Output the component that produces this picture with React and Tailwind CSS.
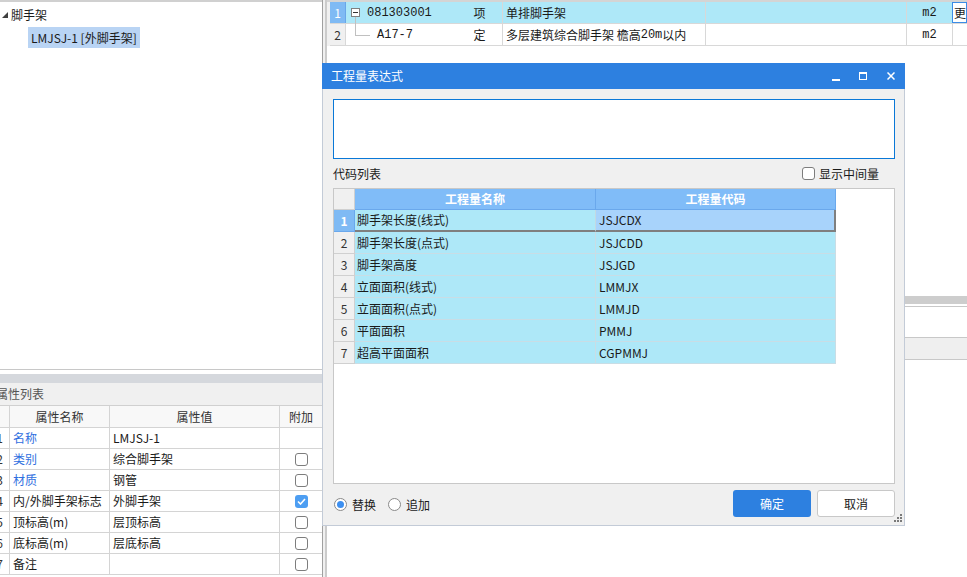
import React from 'react';

const cjk = "font-['Noto_Sans_CJK_SC','Noto_Sans',sans-serif]";
const mono = "font-['Liberation_Mono',monospace]";

const props = [
  { n: 1, name: '名称', blue: true, val: 'LMJSJ-1', cb: null },
  { n: 2, name: '类别', blue: true, val: '综合脚手架', cb: false },
  { n: 3, name: '材质', blue: true, val: '钢管', cb: false },
  { n: 4, name: '内/外脚手架标志', val: '外脚手架', cb: true },
  { n: 5, name: '顶标高(m)', val: '层顶标高', cb: false },
  { n: 6, name: '底标高(m)', val: '层底标高', cb: false },
  { n: 7, name: '备注', val: '', cb: false },
];

const codes = [
  ['脚手架长度(线式)', 'JSJCDX'],
  ['脚手架长度(点式)', 'JSJCDD'],
  ['脚手架高度', 'JSJGD'],
  ['立面面积(线式)', 'LMMJX'],
  ['立面面积(点式)', 'LMMJD'],
  ['平面面积', 'PMMJ'],
  ['超高平面面积', 'CGPMMJ'],
];

const Checkbox = ({ checked }) =>
  checked ? (
    <div className="w-[13px] h-[13px] rounded-[3px] bg-[#4d9ef2] flex items-center justify-center">
      <svg width="9" height="7" viewBox="0 0 9 7">
        <path d="M1 3.5 L3.5 6 L8 1" stroke="white" strokeWidth="1.6" fill="none" />
      </svg>
    </div>
  ) : (
    <div className="w-[13px] h-[13px] rounded-[3px] border border-[#7d7d7d] bg-white" />
  );

const Radio = ({ checked }) => (
  <div className="w-[13px] h-[13px] rounded-full border border-[#8a8a8a] bg-white flex items-center justify-center">
    {checked && <div className="w-[7px] h-[7px] rounded-full bg-[#3d8ff0]" />}
  </div>
);

const LeftPane = () => (
  <div className="w-[323px] h-full flex flex-col border-r border-[#a0a0a0] bg-white">
    {/* tree */}
    <div className="h-[370px] border-t-2 border-[#d0d0d0] border-b border-b-[#c8c8c8] flex flex-col">
      <div className="h-[22px] mt-[2px] flex items-center">
        <svg width="6" height="6" viewBox="0 0 6 6" className="ml-[2px] mr-[3px]">
          <polygon points="6,0 6,6 0,6" fill="#404040" />
        </svg>
        <span className="leading-[22px]">脚手架</span>
      </div>
      <div className="h-[22px] flex items-center ml-[28px]">
        <span className="bg-[#b9d4f4] px-[3px] leading-[21px]">LMJSJ-1 [外脚手架]</span>
      </div>
    </div>
    <div className="h-[4px]" />
    <div className="h-[9px] bg-[#d5d8dd]" />
    <div className="h-[23px] bg-[#f0f0f0] flex items-center text-[#555] -ml-[4px] pl-0 border-b border-[#d0d0d0]">
      属性列表
    </div>
    {/* property table */}
    <div className="flex h-[22px] bg-[#f8f8f8] border-b border-[#d4d4d4] text-[#333]">
      <div className="w-[10px] border-r border-[#d4d4d4]" />
      <div className="w-[100px] border-r border-[#d4d4d4] flex items-center justify-center">属性名称</div>
      <div className="w-[170px] border-r border-[#d4d4d4] flex items-center justify-center">属性值</div>
      <div className="w-[42px] flex items-center justify-center">附加</div>
    </div>
    {props.map((p) => (
      <div key={p.n} className="flex h-[21px] border-b border-[#d4d4d4] shrink-0">
        <div className="w-[10px] overflow-hidden border-r border-[#d4d4d4] flex items-center">
          <div className="w-[20px] -ml-[10px] text-center text-[#333]">{p.n}</div>
        </div>
        <div className={`w-[100px] border-r border-[#d4d4d4] flex items-center pl-[3px] whitespace-nowrap ${p.blue ? 'text-[#2f6fe0]' : ''}`}>
          {p.name}
        </div>
        <div className="w-[170px] border-r border-[#d4d4d4] flex items-center pl-[3px]">{p.val}</div>
        <div className="w-[42px] flex items-center justify-center">
          {p.cb !== null && <Checkbox checked={p.cb} />}
        </div>
      </div>
    ))}
  </div>
);

const TopRow = ({ active, num, children }) => (
  <div className={`flex h-[22px] border-b border-[#d8d8d8] ${active ? 'bg-[#aee8f8]' : 'bg-white'}`}>
    <div
      className={`w-[16px] flex items-center justify-center border-r ${
        active ? 'bg-[#7fbaf4] text-white border-[#6aa6e8]' : 'bg-[#f0f0f0] text-[#333] border-[#d8d8d8]'
      }`}
    >
      {num}
    </div>
    {children}
  </div>
);

const RightPane = () => (
  <div className="flex-1 h-full flex flex-col border-l-2 border-[#cbcbcb] bg-white">
    <div className="pl-[3px] bg-[#f0f0f0] border-t-2 border-[#d4d4d4]">
      <TopRow active num="1">
        <div className="w-[111px] flex items-center pl-[5px]">
          <div className="w-[9px] h-[9px] border border-[#808080] bg-white flex items-center justify-center mr-[7px]">
            <div className="w-[5px] h-px bg-[#333]" />
          </div>
          <span className={mono}>081303001</span>
        </div>
        <div className="w-[45px] flex items-center justify-center">项</div>
        <div className="w-[203px] border-l border-[#d8d8d8] flex items-center pl-[3px]">单排脚手架</div>
        <div className="w-[201px] border-l border-[#d8d8d8]" />
        <div className={`w-[46px] border-l border-[#d8d8d8] flex items-center justify-center ${mono}`}>m2</div>
        <div className="flex-1 bg-white border border-[#3c8ce6] flex items-center pl-[1px] overflow-hidden whitespace-nowrap">更</div>
      </TopRow>
      <TopRow num="2">
        <div className="w-[111px] relative flex items-center">
          <div className="absolute left-[9px] top-[-7px] w-px h-[18px] bg-[#c0c0c0]" />
          <div className="absolute left-[9px] top-[11px] w-[15px] h-px bg-[#c0c0c0]" />
          <span className={`${mono} ml-[31px]`}>A17-7</span>
        </div>
        <div className="w-[45px] flex items-center justify-center">定</div>
        <div className="w-[203px] border-l border-[#d8d8d8] flex items-center pl-[3px] whitespace-nowrap">
          多层建筑综合脚手架&nbsp;檐高<span className={mono}>20m</span>以内
        </div>
        <div className="w-[201px] border-l border-[#d8d8d8]" />
        <div className={`w-[46px] border-l border-[#d8d8d8] flex items-center justify-center ${mono}`}>m2</div>
        <div className="flex-1 border-l border-[#d8d8d8]" />
      </TopRow>
    </div>
    <div className="mt-[250px] h-[8px] bg-[#cdcdcd]" />
    <div className="mt-[2px] h-px bg-[#c8c8c8]" />
    <div className="mt-[30px] h-[23px] bg-[#efefef] border-y border-[#c8c8c8]" />
  </div>
);

const Dialog = () => (
  <div className="absolute left-[322px] top-[63px] w-[583px] h-[463px] flex flex-col">
    <div className="h-[26px] bg-[#2d80e0] flex items-center text-white pl-[9px] shrink-0">
      <span className="flex-1">工程量表达式</span>
      <svg width="8" height="8" viewBox="0 0 8 8" className="mr-[19px] mt-[4px]">
        <rect x="0" y="5" width="8" height="2" fill="white" />
      </svg>
      <svg width="8" height="8" viewBox="0 0 8 8" className="mr-[20px]">
        <rect x="0.5" y="0.5" width="7" height="7" fill="none" stroke="white" strokeWidth="1" />
        <rect x="0" y="0" width="8" height="2" fill="white" />
      </svg>
      <svg width="8" height="8" viewBox="0 0 8 8" className="mr-[10px]">
        <path d="M0.5 0.5 L7.5 7.5 M7.5 0.5 L0.5 7.5" stroke="white" strokeWidth="1.5" />
      </svg>
    </div>
    <div className="flex-1 relative flex flex-col bg-[#f0f0f0] border border-t-0 border-[#c3cbd7] pl-[10px] pr-[9px] pt-[10px]">
      <div className="h-[60px] bg-white border border-[#0a78d7] shrink-0" />
      <div className="h-[29px] flex items-center justify-between shrink-0">
        <span>代码列表</span>
        <div className="flex items-center gap-[4px] mr-[16px]">
          <Checkbox checked={false} />
          <span>显示中间量</span>
        </div>
      </div>
      <div className="h-[296px] bg-white border border-[#c8c8c8] shrink-0 flex flex-col">
        <div className="flex h-[21px] shrink-0">
          <div className="w-[21px] bg-[#f0f0f0] border-r border-b border-[#d0d0d0]" />
          <div className="w-[241px] bg-[#80bcf8] border-r border-b border-[#6aa8ec] flex items-center justify-center text-white font-bold">
            工程量名称
          </div>
          <div className="w-[240px] bg-[#80bcf8] border-b border-r border-[#6aa8ec] flex items-center justify-center text-white font-bold">
            工程量代码
          </div>
        </div>
        {codes.map(([name, code], i) => {
          const active = i === 0;
          return (
            <div key={code} className="flex h-[22px] shrink-0">
              <div
                className={`w-[21px] flex items-center justify-center border-r border-b ${
                  active ? 'bg-[#7fbaf4] text-white font-bold border-[#6aa8ec]' : 'bg-[#f0f0f0] text-[#333] border-[#d0d0d0]'
                }`}
              >
                {i + 1}
              </div>
              <div
                className={`w-[241px] bg-[#aee8f8] flex items-center pl-[2px] border-r ${
                  active ? 'border-b-2 border-b-[#7f7f7f] border-r-[#c3d9e2]' : 'border-b border-[#c9dde5]'
                }`}
              >
                {name}
              </div>
              <div
                className={`w-[240px] flex items-center pl-[3px] ${
                  active ? 'bg-[#a8d3fb] border-b-2 border-r-2 border-[#7f7f7f]' : 'bg-[#aee8f8] border-b border-r border-[#c9dde5]'
                }`}
              >
                {code}
              </div>
            </div>
          );
        })}
      </div>
      <div className="flex-1 flex items-center justify-between">
        <div className="flex items-center ml-[1px]">
          <Radio checked />
          <span className="ml-[5px]">替换</span>
          <div className="ml-[12px]">
            <Radio checked={false} />
          </div>
          <span className="ml-[5px]">追加</span>
        </div>
        <div className="flex items-center gap-[6px] mb-[2px]">
          <div className="w-[78px] h-[27px] rounded-[3px] bg-[#2d80e0] text-white flex items-center justify-center">确定</div>
          <div className="w-[78px] h-[27px] rounded-[3px] bg-white border border-[#c8c8c8] flex items-center justify-center">取消</div>
        </div>
      </div>
      <svg width="9" height="9" viewBox="0 0 9 9" className="absolute right-[1px] bottom-[2px]">
        <rect x="6" y="0" width="2" height="2" fill="#7a7a7a" />
        <rect x="3" y="3" width="2" height="2" fill="#7a7a7a" />
        <rect x="6" y="3" width="2" height="2" fill="#7a7a7a" />
        <rect x="0" y="6" width="2" height="2" fill="#7a7a7a" />
        <rect x="3" y="6" width="2" height="2" fill="#7a7a7a" />
        <rect x="6" y="6" width="2" height="2" fill="#7a7a7a" />
      </svg>
    </div>
  </div>
);

export default function App() {
  return (
    <div className={`relative w-[967px] h-[577px] overflow-hidden bg-white flex text-[12px] leading-[16px] text-[#1a1a1a] ${cjk}`}>
      <LeftPane />
      <div className="w-[5px] h-full bg-[#f0f0f0]" />
      <RightPane />
      <Dialog />
    </div>
  );
}
